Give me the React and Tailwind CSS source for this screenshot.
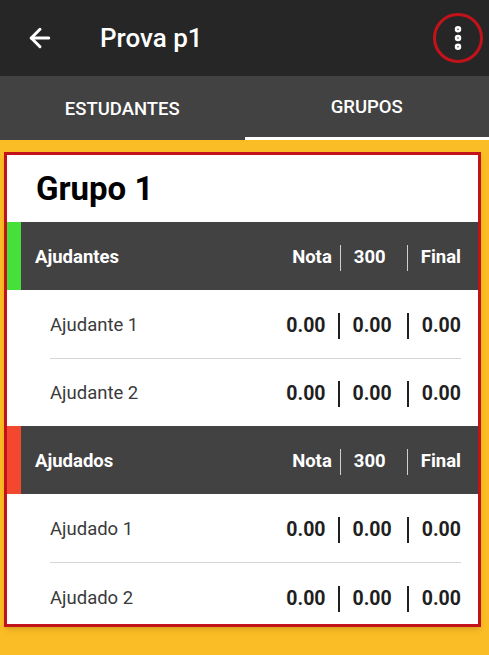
import { ArrowLeft, MoreVertical } from 'lucide-react'

const groups = [
  {
    title: 'Ajudantes',
    strip: 'bg-[#45e03a]',
    rows: ['Ajudante 1', 'Ajudante 2'],
  },
  {
    title: 'Ajudados',
    strip: 'bg-[#f4472f]',
    rows: ['Ajudado 1', 'Ajudado 2'],
  },
]

function SectionHeader({ title, strip }) {
  return (
    <div className="flex h-[68px] bg-[#424242] text-white">
      <div className={`w-[14px] ${strip}`} />
      <div className="flex flex-1 items-center pl-[14px] pr-[17px] pt-[4px] text-[18.5px] font-bold">
        <span className="flex-1">{title}</span>
        <span>Nota</span>
        <span className="ml-[8px] h-[26px] w-px bg-[#cfcfcf]" />
        <span className="ml-[13px] w-[34px]">300</span>
        <span className="ml-[19px] h-[26px] w-px bg-[#cfcfcf]" />
        <span className="ml-[13px]">Final</span>
      </div>
    </div>
  )
}

function ScoreRow({ name, first, last }) {
  return (
    <div className={`ml-[43px] mr-[17px] flex items-center ${first ? '' : 'border-t border-[#d6d6d6]'} ${last ? 'h-[62px] pt-[11px]' : 'h-[68px] pt-[3px]'}`}>
      <span className="flex-1 text-[18.5px] text-[#3a3a3a]">{name}</span>
      <div className="flex items-center text-[19.5px] font-bold text-[#1f1f1f]">
        <span>0.00</span>
        <span className="ml-[12px] h-[26px] w-[2px] bg-[#1f1f1f]" />
        <span className="ml-[13px]">0.00</span>
        <span className="ml-[15px] h-[26px] w-[2px] bg-[#1f1f1f]" />
        <span className="ml-[13px]">0.00</span>
      </div>
    </div>
  )
}

export default function App() {
  return (
    <div className="h-[655px] w-[489px] overflow-hidden bg-[#fbbd25]" style={{ fontFamily: 'Roboto, "Noto Sans", sans-serif' }}>
      <div className="flex h-[76px] items-center bg-[#262626] text-white">
        <ArrowLeft size={30} strokeWidth={2.4} className="ml-[25px]" />
        <span className="ml-[45px] flex-1 text-[26px] font-medium">Prova p1</span>
        <div className="mr-[6px] flex h-[50px] w-[50px] items-center justify-center rounded-full border-[3px] border-[#c3131a]">
          <MoreVertical size={30} strokeWidth={3.2} />
        </div>
      </div>

      <div className="flex h-[64px] bg-[#424242] text-[18.5px] font-medium text-white">
        <div className="flex flex-1 items-center justify-center pt-[3px]">ESTUDANTES</div>
        <div className="flex flex-1 flex-col">
          <div className="flex flex-1 items-center justify-center pt-[3px]">GRUPOS</div>
          <div className="h-[3px] bg-white" />
        </div>
      </div>

      <div className="pl-[4px] pr-[8px] pt-[12px]">
        <div className="border-[3px] border-[#c3131a] bg-white shadow-md">
          <div className="flex h-[67px] items-center pl-[29px] text-[33px] font-bold text-black">Grupo 1</div>
          {groups.map((g, gi) => (
            <div key={g.title}>
              <SectionHeader title={g.title} strip={g.strip} />
              {g.rows.map((r, i) => (
                <ScoreRow key={r} name={r} first={i === 0} last={gi === groups.length - 1 && i === g.rows.length - 1} />
              ))}
            </div>
          ))}
        </div>
      </div>
    </div>
  )
}
